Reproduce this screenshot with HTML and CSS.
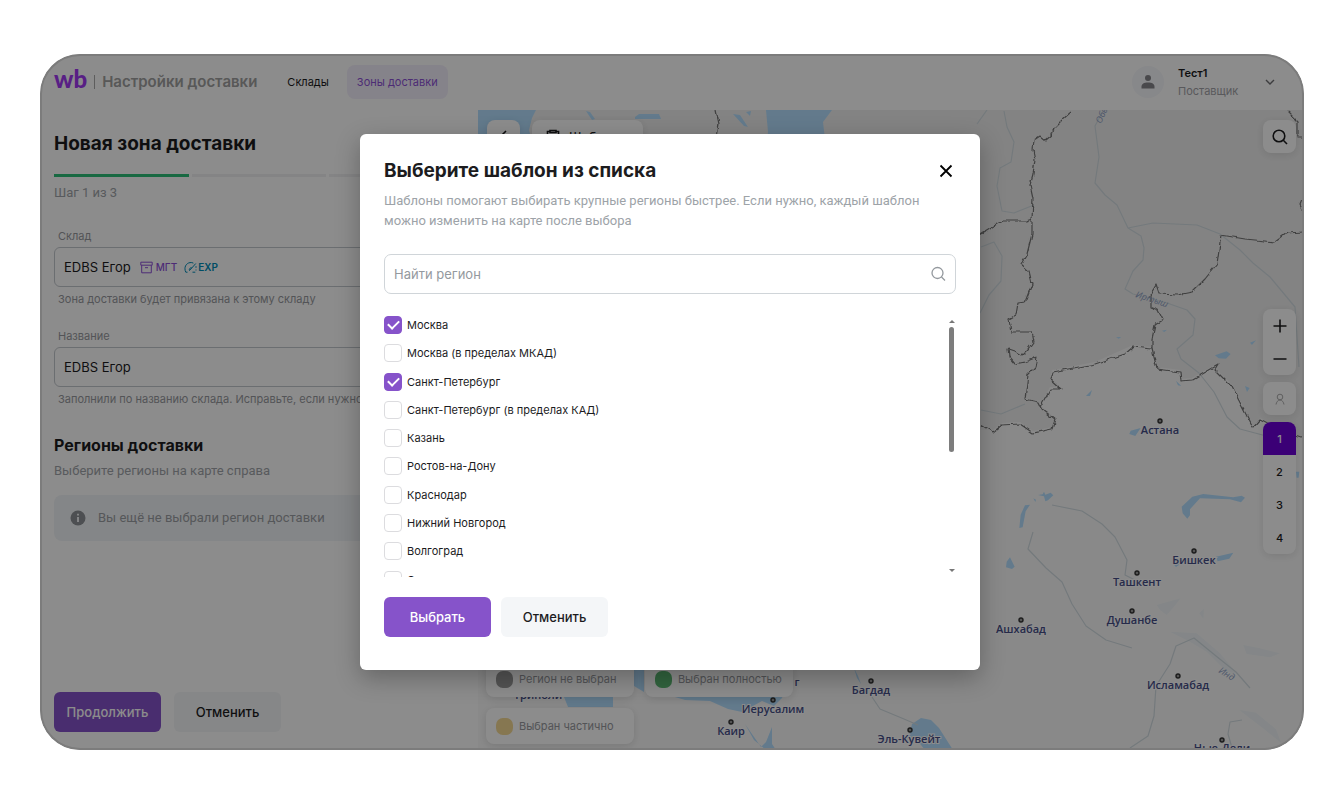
FILE: index.html
```html
<!DOCTYPE html>
<html lang="ru">
<head>
<meta charset="utf-8">
<meta name="viewport" content="width=device-width, initial-scale=1">
<title>Настройки доставки</title>
<link rel="stylesheet" href="styles.css">
</head>
<body>
<div class="app">
  <header class="header">
    <a class="logo" href="#"><span class="logo-mark">wb</span><span class="logo-bar"></span><span class="logo-text">Настройки доставки</span></a>
    <nav class="nav">
      <a class="nav-link" href="#">Склады</a>
      <a class="nav-link nav-link-active" href="#">Зоны доставки</a>
    </nav>
    <button class="profile" type="button">
      <span class="avatar"><svg width="16" height="16" viewBox="0 0 16 16"><circle cx="8" cy="4" r="3"/><path d="M1.500 14.500v-1.700C1.500 10 4 8.600 8 8.600s6.500 1.400 6.500 4.200v1.700z"/></svg></span>
      <span class="profile-info"><span class="profile-name">Тест1</span><span class="profile-role">Поставщик</span></span>
      <svg class="chevron" width="12" height="8" viewBox="0 0 12 8"><path d="M2 2l4 4 4-4"/></svg>
    </button>
  </header>

  <div class="content">
    <form class="panel">
      <h1 class="panel-title">Новая зона доставки</h1>
      <div class="steps"><span class="step step-done"></span><span class="step"></span><span class="step"></span></div>
      <p class="muted step-label">Шаг 1 из 3</p>

      <div class="field">
        <label class="field-label" for="warehouse">Склад</label>
        <button class="control" id="warehouse" type="button">
          <span>EDBS Егор</span>
          <span class="tag tag-mgt"><svg width="13" height="13" viewBox="0 0 13 13"><path d="M.8 1.200h11.400v3H.8zM1.700 4.200v7.600h9.600V4.200M5 6.700h3"/></svg>МГТ</span>
          <span class="tag tag-exp"><svg width="13" height="13" viewBox="0 0 13 13"><path d="M3.500 11.200H1.800C-.4 6.500 2 2.200 6 1.600c1.200-.2 2.400 0 3.400.5M5.500 9.500L11.800 2.500M5.500 9.500c-.7-1.700.8-3 2.200-2.700M12 5.200v1.600M12 8.500v1M8.500 11.200h2.800"/></svg>EXP</span>
        </button>
        <p class="hint">Зона доставки будет привязана к этому складу</p>
      </div>

      <div class="field">
        <label class="field-label" for="zone-name">Название</label>
        <input class="control" id="zone-name" type="text" value="EDBS Егор">
        <p class="hint">Заполнили по названию склада. Исправьте, если нужно</p>
      </div>

      <h2 class="section-title">Регионы доставки</h2>
      <p class="muted">Выберите регионы на карте справа</p>
      <div class="notice">
        <svg width="16" height="16" viewBox="0 0 16 16"><circle cx="8" cy="8" r="7.500"/><path d="M8 7v5M8 3.800v1.800"/></svg>
        <span>Вы ещё не выбрали регион доставки</span>
      </div>
      <div class="panel-actions">
        <button class="btn btn-primary" type="button">Продолжить</button>
        <button class="btn btn-secondary" type="button">Отменить</button>
      </div>
    </form>

    <section class="map" aria-label="Карта">
      <svg class="map-canvas" viewBox="478 110 826 640" preserveAspectRatio="xMinYMin slice">
        <defs>
          <filter id="rough" x="-5%" y="-5%" width="110%" height="110%">
            <feTurbulence type="fractalNoise" baseFrequency=".13" numOctaves="2" seed="4"/>
            <feDisplacementMap in="SourceGraphic" scale="5" xChannelSelector="R" yChannelSelector="G"/>
          </filter>
        </defs>
        <path class="land" d="M478 110H1304V438L1277 427 1260 418 1253 426 1232 385 1215 368 1218 363 1192 378 1181 379 1180 370 1157 367 1152 347 1133 345 1095 362 1052 370 1050 378 1060 387 1050 387 1040 405 1055 418 1052 427 1033 431 1020 422 1002 423 993 430 478 423z"/>

        <g class="water">
          <path d="M478 110h58l-4 8-3 12 5 20h-56z"/>
          <path d="M586 111l4 1 5 7-3 1zM635 117l4-3h20l2 5h-26zM733 114l7 1 8 12-4-1zM746 112l5-1-1 5zM766 110h66l-9 12 3 26h-60l2-16z"/>
          <path d="M562 692h51v15h-45zM634 668h10v24l-10-6zM655 690h130l-3 8-8 8-12-5-20 11-14-3-18-8-25-1-20-6zM745 724l9 16 12 10h10l-4-6 0-17-6 15-5 5zM912 724l9-6 10 2 8 8 14 22h-28l-8-10-8-4z"/>
          <path d="M854 668l4 8 3 8-4-6z"/>
        </g>
        <g class="water" transform="translate(970 400) scale(.3333)">
          <path d="M635 320l3 20 14 16 8-10 0-18 30-33 90 3 33 9 12-14-10-6-25 5-90-10-33 8zM204 285l18 4 4 15 8-3 16-15-8-8-16 6-4-9-4 8zM165 316l15-2-13 20-9 48-10 2 4-40zM110 485l10-13 14 28-8 7-18-5zM738 470l52-12-12 18-35 8zM608 490l22 3-12 8zM482 92l30-8-16 24-18-6zM978 215l10 0-2 18-6 0zM190 295l8 4-2 7z"/>
        </g>
        <g class="water" transform="translate(970 250) scale(.3333)">
          <path d="M735 316l35-12 12 8-14 14-22-1zM825 408l14 6-8 12zM348 438l18-18-6 18zM618 392l16 16-10-2zM840 278l18-7-12 14zM438 262l16-1-8 5zM576 242l15-3-8 7z"/>
        </g>
        <g class="glaciers" transform="translate(970 560) scale(.3333)">
          <path d="M560 135l72-20-20 25-22 25-20-15zM600 215l80 5 70 60 50 60-30-5-60-60-50-30zM820 255l50 10 60 15-30 12-70-10zM808 450l50 8 60 50 15 40-50-40zM688 160l14-14-2 30z"/>
        </g>

        <g class="river">
          <path d="M1103 111l-8 15 4 31-4 26 10 12 12 10 11 23 13 8 3 12-1 12-10 11-8 18 8 5 34 9 20 7 8 9-2 16-16 14 4 10 18 14 15 19 13 25 13 12 30 8M1128 228l25-5 44 2 23 9 20 16 13 13 17 14 25 30 4 60M1004 111l3 16 7 15-3 20-11 6-3 18 5 25 12 2 20-8M981 247l13-5 8 14-1 25-12 14-9 18M987 110l-10 14M981 410l20 4 24-10"/>
          <path d="M1052 505l30 6 20 13 13 13 12 23-2 15 12 6M1033 532l-5 17 18 19 16 14 10 22 14 22 20 14 26 8M1130 748l18-12 6-20 2-30 14-22 6-18 18-8 22 18 20 16 14 16M1242 720l-12 2-2 12 4 14M872 697l8 12 24 10 14 6"/>
        </g>

        <g class="border" filter="url(#rough)">
          <path d="M1071 112l-9 8-8 8-2 6-7 6-5-4-6 4-1 10 2 10-2 14-3 11 3 14-1 20 0 15-5 20-6 10 8 7 3 13-7 18-7 1-2 12-7 4 2 13h20l2 10-5 7-6 6-5-3-9-3 1 8 6 7 10-2 12-5-2 10-7 7-3 25 13 3 4 8 13 10-3 9-19 4-13-9-18 1-9 7-12-7"/>
          <path d="M1040 407l10-18h10l-10-9 2-8 43-8 30-10 8-7 19 2v-10l3-14 8-5-5-10-8-3v-12l6-10 3 9 18 1 15-3 13-13 12-15 4-29 24 4 30 3 12-9 17-1"/>
          <path d="M1152 349l5 20 23 3 1 9 11-1 26-15-3 5 17 17 21 41 7-8 17 9 27 9M979 235l23-14h25l6-2M1287 111l11 11v15h8M1304 195l-4 10 4 8M716 110l3 14-4 26"/>
        </g>

        <g class="cities">
          <g class="dot"><circle cx="1160" cy="421" r="2"/><circle cx="1194" cy="551" r="2"/><circle cx="1137" cy="573" r="2"/><circle cx="1132" cy="611" r="2"/><circle cx="1021" cy="620" r="2"/><circle cx="1178" cy="676" r="2"/><circle cx="1222" cy="740" r="2"/><circle cx="871" cy="681" r="2"/><circle cx="773" cy="700" r="2"/><circle cx="731" cy="722" r="2"/><circle cx="910" cy="730" r="2"/></g>
          <text x="1160" y="434">Астана</text>
          <text x="1194" y="564">Бишкек</text>
          <text x="1137" y="586">Ташкент</text>
          <text x="1132" y="624">Душанбе</text>
          <text x="1021" y="633">Ашхабад</text>
          <text x="1178" y="689">Исламабад</text>
          <text x="1222" y="752">Нью-Дели</text>
          <text x="871" y="694">Багдад</text>
          <text x="773" y="713">Иерусалим</text>
          <text x="731" y="735">Каир</text>
          <text x="909" y="743">Эль-Кувейт</text>
          <text x="538" y="699">Триполи</text>
          <text x="797" y="686">г</text>
        </g>
        <g class="river-names">
          <text transform="translate(1135 297) rotate(18)">Иртыш</text>
          <text transform="translate(1218 672) rotate(32)">Инд</text>
          <text transform="translate(1101 124) rotate(-65)">Обь</text>
        </g>
      </svg>

      <div class="map-top">
        <button class="map-btn" type="button" aria-label="Назад"><svg width="16" height="16" viewBox="0 0 16 16"><path d="M10 2L4 8l6 6"/></svg></button>
        <button class="map-btn map-templates" type="button"><svg width="14" height="16" viewBox="0 0 14 16"><path d="M4 2.500H1.500v12h11v-12H10M4 1.500h6v2H4zM4 7.500h6M4 10.500h6"/></svg>Шаблоны</button>
        <button class="map-btn map-search" type="button" aria-label="Поиск"><svg width="18" height="18" viewBox="0 0 18 18"><circle cx="8" cy="8" r="5.800"/><path d="M12.300 12.300L16 16"/></svg></button>
      </div>
      <div class="map-side">
        <div class="map-group">
          <button class="map-cell" type="button" aria-label="Приблизить"><svg width="16" height="16" viewBox="0 0 16 16"><path d="M8 1.500v13M1.500 8h13"/></svg></button>
          <button class="map-cell" type="button" aria-label="Отдалить"><svg width="16" height="16" viewBox="0 0 16 16"><path d="M1.500 8h13"/></svg></button>
        </div>
        <button class="map-btn map-person" type="button" aria-label="Моё местоположение"><svg width="12" height="12" viewBox="0 0 12 12"><circle cx="6" cy="4" r="2.800"/><path d="M2 11.500c.4-2.500 2-4.500 4-4.500s3.600 2 4 4.500"/></svg></button>
        <div class="map-group">
          <button class="map-cell map-cell-active" type="button">1</button>
          <button class="map-cell" type="button">2</button>
          <button class="map-cell" type="button">3</button>
          <button class="map-cell" type="button">4</button>
        </div>
      </div>
      <ul class="legend">
        <li class="legend-item"><span class="swatch swatch-none"></span>Регион не выбран</li>
        <li class="legend-item"><span class="swatch swatch-full"></span>Выбран полностью</li>
        <li class="legend-item"><span class="swatch swatch-part"></span>Выбран частично</li>
      </ul>
    </section>
  </div>

  <div class="overlay">
    <div class="modal" role="dialog" aria-modal="true" aria-labelledby="modal-title">
      <div class="modal-head">
        <h2 class="modal-title" id="modal-title">Выберите шаблон из списка</h2>
        <button class="close" type="button" aria-label="Закрыть"><svg width="14" height="14" viewBox="0 0 14 14"><path d="M1.500 1.500l11 11M12.500 1.500l-11 11"/></svg></button>
      </div>
      <p class="modal-text">Шаблоны помогают выбирать крупные регионы быстрее. Если нужно, каждый шаблон можно изменить на карте после выбора</p>
      <div class="search">
        <input class="search-input" type="text" placeholder="Найти регион" aria-label="Найти регион">
        <svg width="16" height="16" viewBox="0 0 16 16"><circle cx="7.500" cy="7" r="5.500"/><path d="M11.500 11L15 14.500"/></svg>
      </div>
      <div class="list-wrap">
        <div class="list">
          <label class="option"><input type="checkbox" checked>Москва</label>
          <label class="option"><input type="checkbox">Москва (в пределах МКАД)</label>
          <label class="option"><input type="checkbox" checked>Санкт-Петербург</label>
          <label class="option"><input type="checkbox">Санкт-Петербург (в пределах КАД)</label>
          <label class="option"><input type="checkbox">Казань</label>
          <label class="option"><input type="checkbox">Ростов-на-Дону</label>
          <label class="option"><input type="checkbox">Краснодар</label>
          <label class="option"><input type="checkbox">Нижний Новгород</label>
          <label class="option"><input type="checkbox">Волгоград</label>
          <label class="option"><input type="checkbox">Самара</label>
        </div>
        <div class="scrollbar" aria-hidden="true"><span class="arrow-up"></span><span class="thumb"></span><span class="arrow-down"></span></div>
      </div>
      <div class="modal-actions">
        <button class="btn btn-primary" type="button">Выбрать</button>
        <button class="btn btn-secondary" type="button">Отменить</button>
      </div>
    </div>
  </div>
</div>
</body>
</html>
```
FILE: styles.css
```css
* { box-sizing: border-box; }

body {
  margin: 0;
  min-height: 100vh;
  padding: 54px 40px;
  display: flex;
  background: #fff;
  color: #1c1c1e;
  font-family: Inter, "Noto Sans", sans-serif;
  font-size: 13px;
  line-height: 20px;
}

h1, h2, p, ul { margin: 0; padding: 0; }
ul { list-style: none; }
a { color: inherit; text-decoration: none; }
button, input { font: inherit; color: inherit; }
button { border: 0; padding: 0; background: none; }
svg { flex: none; fill: none; stroke: currentColor; }

.app {
  position: relative;
  flex: 1;
  min-width: 0;
  display: flex;
  flex-direction: column;
  overflow: hidden;
  border-radius: 40px;
}

.app::after {
  content: "";
  position: absolute;
  inset: 0;
  border: 2px solid #7c7c7c;
  border-radius: 40px;
  pointer-events: none;
}

/* Header */
.header {
  display: flex;
  align-items: center;
  height: 56px;
  padding: 0 28px 0 14px;
}

.logo { display: flex; align-items: center; gap: 7px; }
.logo-mark { color: #a139f2; font-family: Lato, sans-serif; font-size: 24px; font-weight: 900; line-height: 24px; padding-bottom: 6px; }
.logo-bar { width: 1px; height: 14px; background: #aaa; }
.logo-text { color: #a0a0a0; font-size: 15px; font-weight: 600; }

.nav { display: flex; gap: 8px; margin-left: 20px; font-size: 11px; line-height: 34px; }
.nav-link { padding: 0 10px; border-radius: 8px; }
.nav-link-active { background: #f3effb; color: #8d51d6; }

.profile { display: flex; align-items: center; margin-left: auto; text-align: left; font-size: 11px; line-height: 18px; }
.avatar { display: grid; place-items: center; width: 32px; height: 32px; margin-right: 14px; border-radius: 50%; background: #f6f7fb; }
.avatar svg { fill: #85858a; stroke: none; }
.profile-info { display: flex; flex-direction: column; width: 86px; }
.profile-name { font-weight: 600; }
.profile-role { color: #a3a3a8; }
.chevron { color: #707074; stroke-width: 1.400; }

.content { flex: 1; display: flex; min-height: 0; }

/* Zone form */
.panel {
  display: flex;
  flex-direction: column;
  width: 438px;
  padding: 22px 14px 18px;
}

.panel-title { font-size: 19px; line-height: 24px; font-weight: 700; }
.steps { display: flex; gap: 3px; margin-top: 18px; }
.step { flex: 1; height: 3px; background: #f0f0f2; }
.step-done { background: #2cc078; }
.muted, .notice, .modal-text { font-family: Roboto, sans-serif; }
.muted { color: #a1a5aa; }
.step-label { margin: 6px 0 23px; }

.field { display: flex; flex-direction: column; margin-bottom: 18px; }
.field-label { padding: 0 4px; color: #97999e; font-size: 11px; line-height: 20px; }
.control {
  display: flex;
  align-items: center;
  gap: 7px;
  height: 40px;
  padding: 0 9px;
  margin: 1px 0 4px;
  border: 1px solid #c4c9ce;
  border-radius: 6px;
  background: transparent;
}
.tag { display: flex; align-items: center; gap: 3px; font-size: 10px; font-weight: 500; }
.tag-mgt { margin-left: 2px; color: #8d4fd8; }
.tag-exp { color: #008cb8; font-weight: 600; gap: 1px; }
.hint { padding: 0 4px; color: #97999e; font-size: 11px; line-height: 17px; }

.section-title { margin-top: 8px; font-size: 16px; line-height: 22px; font-weight: 700; }
.section-title + .muted { margin-top: 5px; }
.notice {
  display: flex;
  align-items: center;
  gap: 12px;
  height: 46px;
  margin-top: 14px;
  padding: 0 16px;
  border-radius: 8px;
  background: #f1f4f7;
  color: #9c9fa4;
}
.notice circle { fill: #8d9195; stroke: none; }
.notice path { stroke: #eef1f4; stroke-width: 2; }
.panel-actions { display: flex; gap: 13px; margin-top: auto; }

.btn { width: 107px; height: 40px; border-radius: 6px; font-weight: 500; }
.btn-primary { background: #8653ca; color: #fff; }
.btn-secondary { background: #f4f6f8; }

/* Map */
.map { position: relative; flex: 1; min-width: 0; overflow: hidden; background: #fafafa; }
.map-canvas { position: absolute; inset: 0; width: 100%; height: 100%; }
.land { fill: #efefef; stroke: none; }
.water { fill: #b4dfff; stroke: none; }
.glaciers { fill: #f0f5f7; stroke: none; }
.river { stroke: #d3dde2; stroke-width: 1.200; stroke-linejoin: round; }
.border { stroke: #757575; stroke-width: 1.200; stroke-linejoin: round; }
.cities text { fill: #464e88; stroke: #fff; stroke-width: 2; paint-order: stroke; font: 600 11px "Open Sans", sans-serif; text-anchor: middle; }
.dot { fill: #999; stroke: #333; stroke-width: 1.400; }
.river-names text { fill: #8e9fc4; stroke: none; font: italic 9px "Open Sans", sans-serif; }

.map-btn {
  display: grid;
  place-items: center;
  width: 33px;
  height: 33px;
  border-radius: 8px;
  background: #fff;
  box-shadow: 0 2px 8px rgba(0, 0, 0, .1);
}
.map-btn svg, .map-cell svg { stroke-width: 1.600; }
.map-top { position: absolute; top: 10px; left: 9px; right: 8px; display: flex; gap: 12px; }
.map-templates { display: flex; align-items: center; gap: 9px; width: auto; padding: 0 14px; }
.map-search { margin-left: auto; }
.map-side { position: absolute; top: 199px; right: 8px; display: flex; flex-direction: column; gap: 7px; }
.map-person { color: #adadad; }
.map-person svg { stroke-width: 1; }
.map-group { display: flex; flex-direction: column; overflow: hidden; border-radius: 8px; background: #fff; box-shadow: 0 2px 8px rgba(0, 0, 0, .1); }
.map-cell { display: grid; place-items: center; width: 33px; height: 33px; font-size: 11px; font-weight: 500; }
.map-cell-active { background: #6c00d8; color: #fff; }

.legend {
  position: absolute;
  left: 8px;
  bottom: 6px;
  display: grid;
  grid-template-columns: 1fr 1fr;
  gap: 11px;
  color: #97999e;
  font-size: 11px;
}
.legend-item {
  display: flex;
  align-items: center;
  gap: 6px;
  height: 36px;
  padding: 0 11px 0 10px;
  border-radius: 8px;
  background: #fff;
  box-shadow: 0 2px 8px rgba(0, 0, 0, .12);
}
.swatch { width: 17px; height: 17px; border-radius: 7px; }
.swatch-none { background: #999; }
.swatch-full { background: #5cb874; }
.swatch-part { background: #f5d994; }

/* Template dialog */
.overlay {
  position: absolute;
  inset: 0;
  display: flex;
  align-items: center;
  justify-content: center;
  padding-right: 4px;
  background: rgba(0, 0, 0, .45);
}
.modal {
  width: 620px;
  padding: 24px 24px 33px;
  border-radius: 6px;
  background: #fff;
  box-shadow: 0 8px 24px rgba(0, 0, 0, .28);
}
.modal-head { display: flex; align-items: center; justify-content: space-between; }
.modal-title { font-size: 19px; line-height: 26px; font-weight: 700; }
.close { display: flex; padding: 3px; color: #000; }
.close svg { stroke-width: 1.800; }
.modal-text { margin: 7px 0 23px; padding-right: 20px; color: #9da3a8; }
.search {
  display: flex;
  align-items: center;
  height: 40px;
  padding: 0 9px;
  border: 1px solid #d0d5d9;
  border-radius: 7px;
  color: #94999e;
}
.search svg { stroke-width: 1.300; }
.search-input { flex: 1; min-width: 0; padding: 0; border: 0; outline: 0; background: none; }
.search-input::placeholder { color: #94999e; opacity: 1; }

.list-wrap { display: flex; justify-content: space-between; height: 265px; margin: 18px 0 20px; overflow: hidden; }
.list { flex: 1; display: grid; grid-auto-rows: 1fr; height: 283px; }
.option { display: flex; align-items: center; gap: 5px; height: 26px; font-size: 11px; }
.option input {
  flex: none;
  appearance: none;
  display: grid;
  place-items: center;
  width: 18px;
  height: 18px;
  margin: 0;
  border: 1px solid #dcdcdf;
  border-radius: 4px;
  background: #fff;
}
.option input:checked { border-color: #8653ca; background: #8653ca; }
.option input:checked::after {
  content: "";
  width: 9px;
  height: 5px;
  margin-bottom: 3px;
  border: solid #fff;
  border-width: 0 0 2px 2px;
  transform: rotate(-45deg);
}
.scrollbar { display: flex; flex-direction: column; align-items: center; width: 9px; padding: 8px 0 5px; }
.arrow-up, .arrow-down { border: 3px solid transparent; }
.arrow-up { border-top: 0; border-bottom-color: #777; }
.arrow-down { margin-top: auto; border-bottom: 0; border-top-color: #777; }
.thumb { width: 5px; height: 125px; margin-top: 4px; border-radius: 3px; background: #7d7d7d; }
.modal-actions { display: flex; gap: 10px; }
```
